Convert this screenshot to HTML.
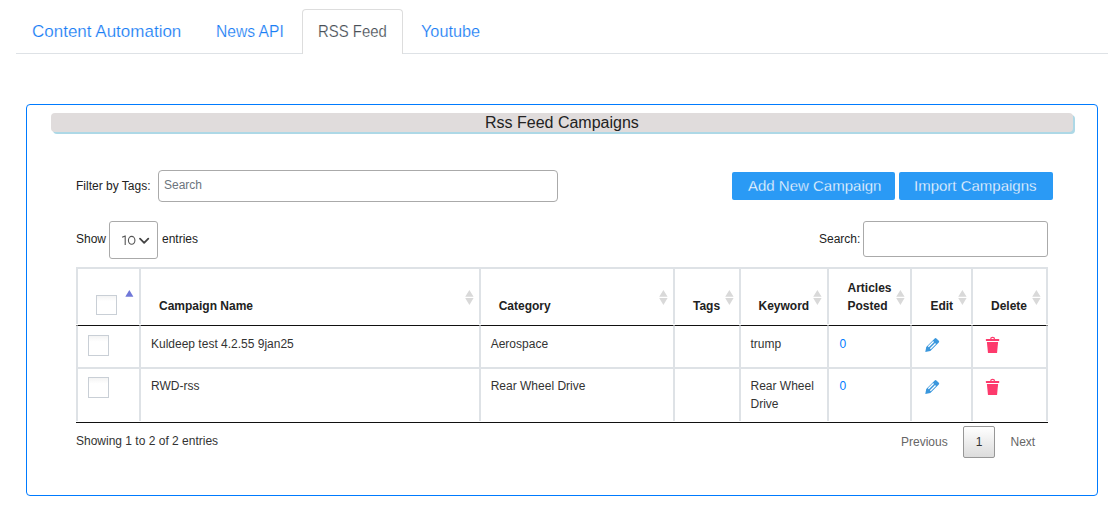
<!DOCTYPE html>
<html><head><meta charset="utf-8">
<style>
html,body{margin:0;padding:0;background:#fff;}
body{width:1111px;height:525px;position:relative;overflow:hidden;font-family:"Liberation Sans",sans-serif;color:#333;}
.a{position:absolute;}
.t{position:absolute;white-space:nowrap;line-height:1;}
.tab{color:#1a7ef5;font-size:17px;-webkit-text-stroke:0.2px #fff;}
.hl{position:absolute;background:#dee2e6;}
.bl{position:absolute;background:#111;}
.th{font-weight:bold;font-size:12px;color:#222;}
.td{font-size:12px;color:#333;}
.cb{position:absolute;width:19px;height:19px;border:1px solid #c9cfd6;background:linear-gradient(#f4f4f4,#fff 30%);}
</style></head>
<body>
<!-- tabs -->
<div class="a" style="left:16px;top:53px;width:1092px;height:1px;background:#dee2e6"></div>
<div class="a" style="left:302px;top:9px;width:101px;height:45px;border:1px solid #ddd;border-bottom:none;border-radius:4px 4px 0 0;background:#fff;box-sizing:border-box"></div>
<div class="t tab" style="left:32px;top:23px;">Content Automation</div>
<div class="t tab" style="left:216px;top:23px;transform:scaleX(0.919);transform-origin:0 0">News API</div>
<div class="t tab" style="left:318px;top:23px;color:#495057;transform:scaleX(0.877);transform-origin:0 0">RSS Feed</div>
<div class="t tab" style="left:421px;top:23px;transform:scaleX(0.958);transform-origin:0 0">Youtube</div>

<!-- panel -->
<div class="a" style="left:26px;top:104px;width:1072px;height:392px;border:1px solid #007bff;border-radius:4px;box-sizing:border-box"></div>
<div class="a" style="left:51px;top:113px;width:1022px;height:19px;background:#e0dcdc;border-radius:4px;box-shadow:2px 2px 0 #add8e6"></div>
<div class="t" style="left:485px;top:115px;font-size:16px;color:#222">Rss Feed Campaigns</div>

<!-- filter -->
<div class="t td" style="left:76px;top:180px;color:#222">Filter by Tags:</div>
<div class="a" style="left:158px;top:170px;width:400px;height:32px;border:1px solid #aaa;border-radius:4px;box-sizing:border-box"></div>
<div class="t" style="left:164px;top:179px;font-size:12px;color:#6c757d">Search</div>

<div class="a" style="left:732px;top:172px;width:163px;height:28px;background:#2a9af5;border-radius:2px"></div>
<div class="t" style="left:748px;top:178px;font-size:15px;color:#fff;-webkit-text-stroke:0.3px #2a9af5">Add New Campaign</div>
<div class="a" style="left:899px;top:172px;width:154px;height:28px;background:#2a9af5;border-radius:2px"></div>
<div class="t" style="left:914px;top:178px;font-size:15px;color:#fff;-webkit-text-stroke:0.3px #2a9af5">Import Campaigns</div>

<!-- show entries -->
<div class="t td" style="left:76px;top:233px;color:#222">Show</div>
<div class="a" style="left:109px;top:221px;width:49px;height:38px;border:1px solid #aaa;border-radius:3px;box-sizing:border-box"></div>
<svg class="a" style="left:115px;top:230px" width="40" height="20" viewBox="0 0 40 20"><path d="M7.1 7.3 L10.2 5.9 L10.2 14.9" fill="none" stroke="#555" stroke-width="1.1" stroke-linejoin="round"/><ellipse cx="16.67" cy="10.3" rx="3.25" ry="3.95" fill="none" stroke="#555" stroke-width="1.1"/><path d="M25 8.7 L29.15 12.8 L33.3 8.7" fill="none" stroke="#444" stroke-width="1.8" stroke-linecap="round" stroke-linejoin="round"/></svg>
<div class="t td" style="left:162px;top:233px;color:#222">entries</div>

<div class="t td" style="left:819px;top:233px;color:#222">Search:</div>
<div class="a" style="left:863px;top:221px;width:185px;height:36px;border:1px solid #aaa;border-radius:3px;box-sizing:border-box"></div>

<!-- table lines -->
<div class="hl" style="left:76px;top:267px;width:972px;height:2px"></div>
<div class="hl" style="left:76px;top:267px;width:2px;height:57px"></div><div class="hl" style="left:76px;top:326px;width:2px;height:95px"></div>
<div class="hl" style="left:139px;top:267px;width:2px;height:57px"></div><div class="hl" style="left:139px;top:326px;width:2px;height:95px"></div>
<div class="hl" style="left:479px;top:267px;width:2px;height:57px"></div><div class="hl" style="left:479px;top:326px;width:2px;height:95px"></div>
<div class="hl" style="left:673px;top:267px;width:2px;height:57px"></div><div class="hl" style="left:673px;top:326px;width:2px;height:95px"></div>
<div class="hl" style="left:739px;top:267px;width:2px;height:57px"></div><div class="hl" style="left:739px;top:326px;width:2px;height:95px"></div>
<div class="hl" style="left:827px;top:267px;width:2px;height:57px"></div><div class="hl" style="left:827px;top:326px;width:2px;height:95px"></div>
<div class="hl" style="left:910px;top:267px;width:2px;height:57px"></div><div class="hl" style="left:910px;top:326px;width:2px;height:95px"></div>
<div class="hl" style="left:971px;top:267px;width:2px;height:57px"></div><div class="hl" style="left:971px;top:326px;width:2px;height:95px"></div>
<div class="hl" style="left:1046px;top:267px;width:2px;height:57px"></div><div class="hl" style="left:1046px;top:326px;width:2px;height:95px"></div>
<div class="hl" style="left:76px;top:367px;width:972px;height:2px"></div>
<div class="bl" style="left:76px;top:325px;width:972px;height:1px"></div>
<div class="bl" style="left:76px;top:422px;width:972px;height:1px"></div>
<div class="a" style="left:76px;top:325px;width:2px;height:1px;background:#888"></div><div class="a" style="left:139px;top:325px;width:2px;height:1px;background:#888"></div><div class="a" style="left:479px;top:325px;width:2px;height:1px;background:#888"></div><div class="a" style="left:673px;top:325px;width:2px;height:1px;background:#888"></div><div class="a" style="left:739px;top:325px;width:2px;height:1px;background:#888"></div><div class="a" style="left:827px;top:325px;width:2px;height:1px;background:#888"></div><div class="a" style="left:910px;top:325px;width:2px;height:1px;background:#888"></div><div class="a" style="left:971px;top:325px;width:2px;height:1px;background:#888"></div><div class="a" style="left:1046px;top:325px;width:2px;height:1px;background:#888"></div>

<!-- header -->
<div class="cb" style="left:96px;top:295px;height:18px"></div>
<svg class="a" style="left:125px;top:289px" width="10" height="17" viewBox="0 0 10 17"><path d="M0.3 7.8 L4.35 1 L8.4 7.8 Z" fill="#7078d8"/></svg>
<div class="t th" style="left:159px;top:300px">Campaign Name</div>
<div class="t th" style="left:498.7px;top:300px">Category</div>
<div class="t th" style="left:693px;top:300px">Tags</div>
<div class="t th" style="left:758.5px;top:300px">Keyword</div>
<div class="t th" style="left:847.5px;top:282px">Articles</div>
<div class="t th" style="left:847.5px;top:300px">Posted</div>
<div class="t th" style="left:930.4px;top:300px">Edit</div>
<div class="t th" style="left:991px;top:300px">Delete</div>

<svg class="a" style="left:465px;top:289px" width="10" height="17" viewBox="0 0 10 17"><path d="M0.2 7.8 L4.4 0.9 L8.6 7.8 Z M0.2 9 L8.6 9 L4.4 15.9 Z" fill="#d9d9d9"/></svg>
<svg class="a" style="left:659px;top:289px" width="10" height="17" viewBox="0 0 10 17"><path d="M0.2 7.8 L4.4 0.9 L8.6 7.8 Z M0.2 9 L8.6 9 L4.4 15.9 Z" fill="#d9d9d9"/></svg>
<svg class="a" style="left:725px;top:289px" width="10" height="17" viewBox="0 0 10 17"><path d="M0.2 7.8 L4.4 0.9 L8.6 7.8 Z M0.2 9 L8.6 9 L4.4 15.9 Z" fill="#d9d9d9"/></svg>
<svg class="a" style="left:813.2px;top:289px" width="10" height="17" viewBox="0 0 10 17"><path d="M0.2 7.8 L4.4 0.9 L8.6 7.8 Z M0.2 9 L8.6 9 L4.4 15.9 Z" fill="#d9d9d9"/></svg>
<svg class="a" style="left:896px;top:289px" width="10" height="17" viewBox="0 0 10 17"><path d="M0.2 7.8 L4.4 0.9 L8.6 7.8 Z M0.2 9 L8.6 9 L4.4 15.9 Z" fill="#d9d9d9"/></svg>
<svg class="a" style="left:957.5px;top:289px" width="10" height="17" viewBox="0 0 10 17"><path d="M0.2 7.8 L4.4 0.9 L8.6 7.8 Z M0.2 9 L8.6 9 L4.4 15.9 Z" fill="#d9d9d9"/></svg>
<svg class="a" style="left:1032px;top:289px" width="10" height="17" viewBox="0 0 10 17"><path d="M0.2 7.8 L4.4 0.9 L8.6 7.8 Z M0.2 9 L8.6 9 L4.4 15.9 Z" fill="#d9d9d9"/></svg>
<!-- row 1 -->
<div class="cb" style="left:88px;top:335px"></div>
<div class="t td" style="left:151px;top:338px">Kuldeep test 4.2.55 9jan25</div>
<div class="t td" style="left:490.7px;top:338px">Aerospace</div>
<div class="t td" style="left:750.5px;top:338px">trump</div>
<div class="t td" style="left:839.5px;top:338px;color:#007bff">0</div>

<!-- row 2 -->
<div class="cb" style="left:88px;top:377px"></div>
<div class="t td" style="left:151px;top:380px">RWD-rss</div>
<div class="t td" style="left:490.7px;top:380px">Rear Wheel Drive</div>
<div class="t td" style="left:750.5px;top:380px">Rear Wheel</div>
<div class="t td" style="left:750.5px;top:398px">Drive</div>
<div class="t td" style="left:839.5px;top:380px;color:#007bff">0</div>

<svg class="a" style="left:920px;top:332px" width="28" height="24" viewBox="0 0 28 24"><g transform="translate(5.3,19.9) rotate(-45)"><path d="M0 0 L4.2 -2.9 L16.2 -2.9 Q17.4 -2.9 17.4 -1.7 L17.4 1.7 Q17.4 2.9 16.2 2.9 L4.2 2.9 Z" fill="#3a97dd"/><rect x="5.8" y="-2.15" width="7.4" height="1.3" fill="#fff"/><rect x="5.8" y="0.65" width="7.4" height="1.3" fill="#fff"/></g></svg>
<svg class="a" style="left:980px;top:332px" width="28" height="24" viewBox="0 0 28 24"><path d="M10.1 7 A2.5 2.2 0 0 1 15.1 7 Z" fill="#fd3a6c"/><ellipse cx="12.6" cy="7" rx="1.3" ry="1.1" fill="#fff"/><rect x="5.9" y="6.9" width="13.3" height="2" rx="0.5" fill="#fd3a6c"/><path d="M6.9 10.1 L18.1 10.1 L17.1 20.4 Q17 21 16.4 21 L8.6 21 Q8 21 7.9 20.4 Z" fill="#fd3a6c"/></svg>
<svg class="a" style="left:920px;top:374px" width="28" height="24" viewBox="0 0 28 24"><g transform="translate(5.3,19.9) rotate(-45)"><path d="M0 0 L4.2 -2.9 L16.2 -2.9 Q17.4 -2.9 17.4 -1.7 L17.4 1.7 Q17.4 2.9 16.2 2.9 L4.2 2.9 Z" fill="#3a97dd"/><rect x="5.8" y="-2.15" width="7.4" height="1.3" fill="#fff"/><rect x="5.8" y="0.65" width="7.4" height="1.3" fill="#fff"/></g></svg>
<svg class="a" style="left:980px;top:374px" width="28" height="24" viewBox="0 0 28 24"><path d="M10.1 7 A2.5 2.2 0 0 1 15.1 7 Z" fill="#fd3a6c"/><ellipse cx="12.6" cy="7" rx="1.3" ry="1.1" fill="#fff"/><rect x="5.9" y="6.9" width="13.3" height="2" rx="0.5" fill="#fd3a6c"/><path d="M6.9 10.1 L18.1 10.1 L17.1 20.4 Q17 21 16.4 21 L8.6 21 Q8 21 7.9 20.4 Z" fill="#fd3a6c"/></svg>
<!-- footer -->
<div class="t td" style="left:76px;top:435px">Showing 1 to 2 of 2 entries</div>
<div class="t td" style="left:901px;top:436px;color:#666">Previous</div>
<div class="a" style="left:963px;top:426px;width:32px;height:32px;border:1px solid #979797;border-radius:2px;box-sizing:border-box;background:linear-gradient(to bottom,#fff 0%,#dcdcdc 100%)"></div>
<div class="t td" style="left:975.7px;top:436px;color:#333">1</div>
<div class="t td" style="left:1010.5px;top:436px;color:#666">Next</div>
</body></html>
